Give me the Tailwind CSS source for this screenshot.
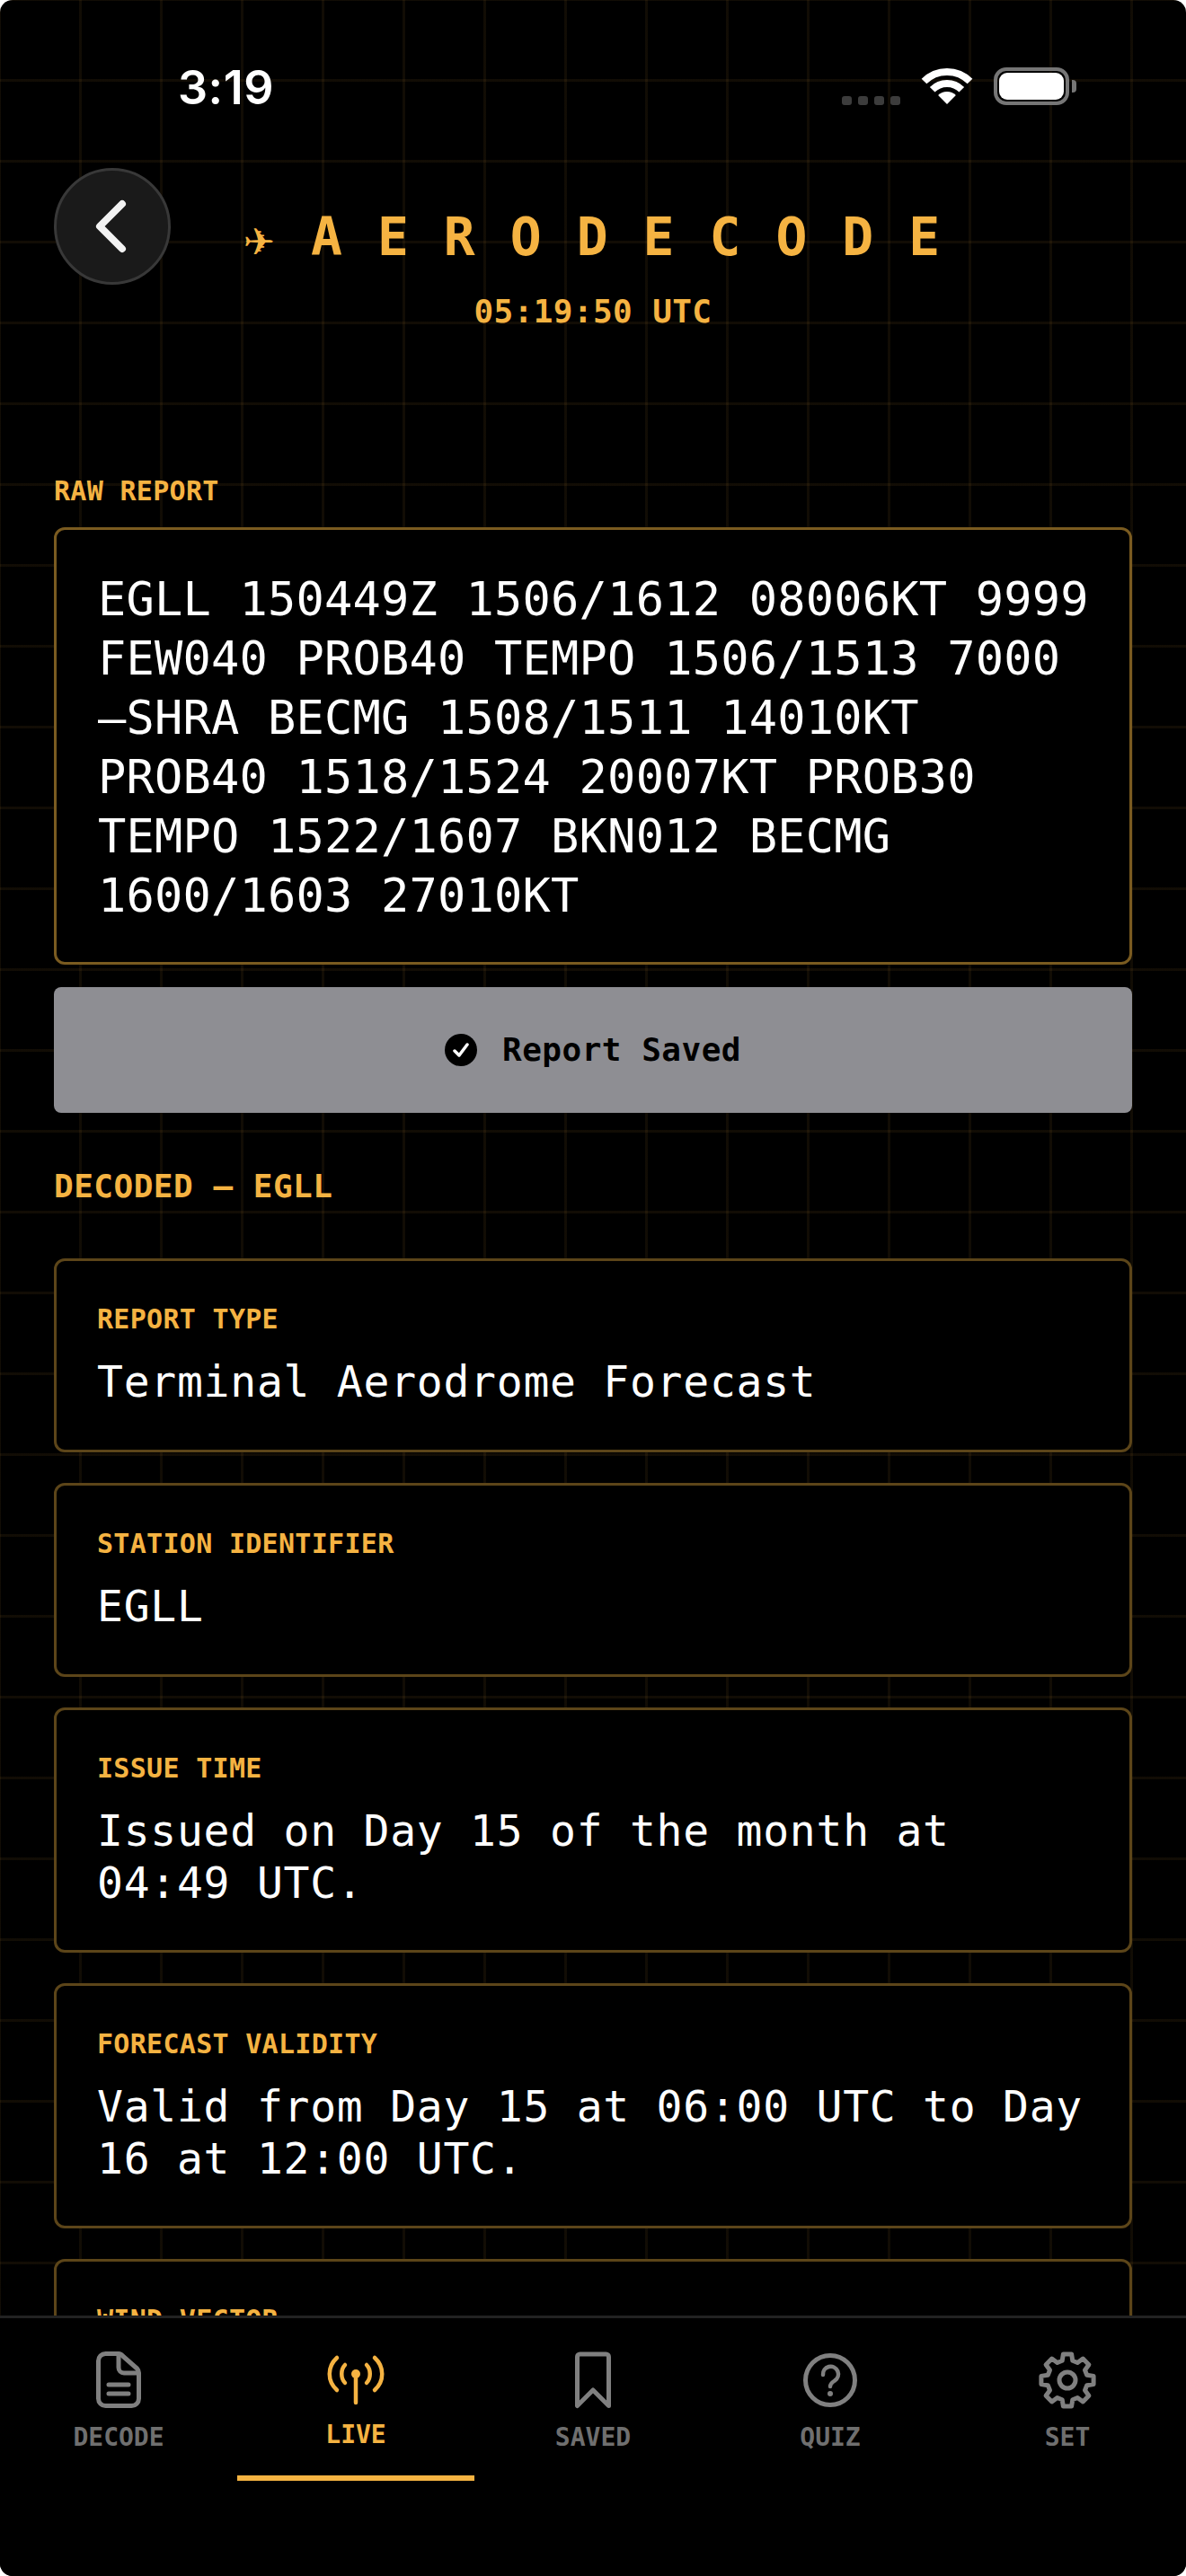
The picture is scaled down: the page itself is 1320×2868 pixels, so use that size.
<!doctype html>
<html lang="en"><head><meta charset="utf-8"><title>AeroDecode</title>
<script src="https://cdn.jsdelivr.net/npm/@tailwindcss/browser@4"></script></head>
<body class="bg-white">
<div class="relative w-[1320px] h-[2868px] overflow-hidden rounded-[14px] bg-black font-['DejaVu_Sans_Mono',monospace] text-[#f5b342] bg-[linear-gradient(to_right,rgba(245,176,65,0.07)_3px,transparent_3px),linear-gradient(to_bottom,rgba(245,176,65,0.07)_3px,transparent_3px)] bg-[size:90px_90px] bg-[position:-2px_-2px]">

  <div class="flex items-end justify-between pt-[72px] pl-[198px] pr-[122px] h-[124px]">
    <span class="font-['Inter',sans-serif] font-semibold text-[52px] leading-[52px] text-white tracking-[0.5px]">3:19</span>
    <div class="flex items-end mb-[7px]">
      <div class="flex gap-[7px] mr-[23px]">
        <span class="w-[11px] h-[10px] rounded-[3px] bg-[#3c3c3c]"></span><span class="w-[11px] h-[10px] rounded-[3px] bg-[#3c3c3c]"></span><span class="w-[11px] h-[10px] rounded-[3px] bg-[#3c3c3c]"></span><span class="w-[11px] h-[10px] rounded-[3px] bg-[#3c3c3c]"></span>
      </div>
      <svg class="mr-[23px]" width="58" height="42" viewBox="0 0 58 42" fill="none"><path d="M3.5 15.5A36 36 0 0 1 54.5 15.5" stroke="#fff" stroke-width="8"/><path d="M12.7 24.7A23 23 0 0 1 45.3 24.7" stroke="#fff" stroke-width="8"/><path d="M29 41L19.1 31.1A14 14 0 0 1 38.9 31.1Z" fill="#fff"/></svg>
      <div class="flex items-center">
        <div class="w-[84px] h-[42px] border-[4px] border-[#767676] rounded-[14px] p-[2px]"><div class="w-full h-full bg-white rounded-[9px]"></div></div>
        <div class="w-[5px] h-[14px] ml-[3px] bg-[#767676] rounded-r-[4px]"></div>
      </div>
    </div>
  </div>

  <header class="relative mt-[63px] h-[345px] text-center">
    <button class="absolute left-[60px] top-0 w-[130px] h-[130px] rounded-full bg-[#1b1b1b]/95 border-[3px] border-[#383838] flex items-center justify-center">
      <svg class="mr-[6px]" width="44" height="66" viewBox="0 0 44 66" fill="none"><path d="M36 8L11 33L36 58" stroke="#f2f2f2" stroke-width="8" stroke-linecap="round" stroke-linejoin="round"/></svg>
    </button>
    <div class="pt-[47px] pl-[36px] font-bold text-[58px] leading-[60px] tracking-[39px] whitespace-nowrap"><span class="font-['DejaVu_Sans',sans-serif] font-normal text-[42px] tracking-[0px] mr-[40px]">✈</span>AERODECODE</div>
    <div class="mt-[29px] font-bold text-[36px] leading-[36px] tracking-[0.4px]">05:19:50 UTC</div>
  </header>

  <main class="px-[60px]">
    <div class="font-bold text-[30px] leading-[30px] tracking-[0.3px]">RAW REPORT</div>
    <div class="mt-[25px] h-[487px] border-[3px] border-[#7a5b20] rounded-[12px] bg-black pt-[44px] pl-[46px] pr-[20px] text-white text-[52px] leading-[66px] tracking-[0.2px] whitespace-pre-line">EGLL 150449Z 1506/1612 08006KT 9999
FEW040 PROB40 TEMPO 1506/1513 7000
–SHRA BECMG 1508/1511 14010KT
PROB40 1518/1524 20007KT PROB30
TEMPO 1522/1607 BKN012 BECMG
1600/1603 27010KT</div>
    <button class="mt-[25px] w-full h-[140px] rounded-[8px] bg-[#8e8e93] text-black flex items-center justify-center gap-[28px] text-[36px] font-bold tracking-[0.5px]">
      <svg width="36" height="36" viewBox="0 0 36 36"><circle cx="18" cy="18" r="18" fill="#000"/><path d="M11 19L16 24L25 12" fill="none" stroke="#fff" stroke-width="3.5" stroke-linecap="round" stroke-linejoin="round"/></svg>
      <span>Report Saved</span>
    </button>
    <div class="mt-[64px] font-bold text-[36px] leading-[36px] tracking-[0.5px]">DECODED — EGLL</div>
    <div class="mt-[62px] flex flex-col gap-[34.5px]">
      <section class="h-[215.5px] border-[3px] border-[#5c4519] rounded-[12px] bg-black pl-[45px] pt-[50px]">
        <div class="font-bold text-[30px] leading-[30px] tracking-[0.3px]">REPORT TYPE</div>
        <div class="mt-[25px] text-white text-[48px] leading-[58px] tracking-[0.75px]">Terminal Aerodrome Forecast</div>
      </section>
      <section class="h-[215.5px] border-[3px] border-[#5c4519] rounded-[12px] bg-black pl-[45px] pt-[50px]">
        <div class="font-bold text-[30px] leading-[30px] tracking-[0.3px]">STATION IDENTIFIER</div>
        <div class="mt-[25px] text-white text-[48px] leading-[58px] tracking-[0.75px]">EGLL</div>
      </section>
      <section class="h-[272.5px] border-[3px] border-[#5c4519] rounded-[12px] bg-black pl-[45px] pt-[50px]">
        <div class="font-bold text-[30px] leading-[30px] tracking-[0.3px]">ISSUE TIME</div>
        <div class="mt-[25px] text-white text-[48px] leading-[58px] tracking-[0.75px] whitespace-pre-line">Issued on Day 15 of the month at
04:49 UTC.</div>
      </section>
      <section class="h-[272.5px] border-[3px] border-[#5c4519] rounded-[12px] bg-black pl-[45px] pt-[50px]">
        <div class="font-bold text-[30px] leading-[30px] tracking-[0.3px]">FORECAST VALIDITY</div>
        <div class="mt-[25px] text-white text-[48px] leading-[58px] tracking-[0.75px] whitespace-pre-line">Valid from Day 15 at 06:00 UTC to Day
16 at 12:00 UTC.</div>
      </section>
      <section class="h-[215.5px] border-[3px] border-[#5c4519] rounded-[12px] bg-black pl-[45px] pt-[50px]">
        <div class="font-bold text-[30px] leading-[30px] tracking-[0.3px]">WIND VECTOR</div>
      </section>
    </div>
  </main>

  <nav class="absolute left-0 right-0 bottom-0 h-[290px] bg-black border-t-[3px] border-[#222] grid grid-cols-5 text-[#6f6f6f] text-[28px] leading-[28px] font-bold text-center">
    <div class="flex flex-col items-center pt-[37px]">
      <svg width="56" height="64" viewBox="0 0 56 64" fill="none" stroke="#808080" stroke-width="5" stroke-linecap="round" stroke-linejoin="round"><path d="M13.5 2.5H28c2 0 3.5 1 4.5 2.5L48.5 19c1.3 1.5 2 3 2 5V52.5a8 8 0 0 1-8 8H13.5a8 8 0 0 1-8-8V10.5a8 8 0 0 1 8-8z"/><path d="M28 3V18a6 6 0 0 0 6 6H50"/><path d="M17 37H39M17 47H39"/></svg>
      <span class="mt-[18px]">DECODE</span>
    </div>
    <div class="relative flex flex-col items-center pt-[37px] text-[#f5b342]">
      <svg width="64" height="64" viewBox="0 0 64 64" fill="none" stroke="#f5b342" stroke-width="4.5" stroke-linecap="round"><path d="M11 7C0 17 0 33 11 43M53 7C64 17 64 33 53 43M20 15C15 20 15 30 20 35M44 15C49 20 49 30 44 35M32 25V57"/><circle cx="32" cy="25" r="5" fill="#f5b342" stroke="none"/></svg>
      <span class="mt-[15px]">LIVE</span>
      <span class="absolute left-0 right-0 top-[175px] h-[6px] bg-[#f5b342]"></span>
    </div>
    <div class="flex flex-col items-center pt-[37px]">
      <svg width="44" height="64" viewBox="0 0 44 64" fill="none" stroke="#808080" stroke-width="5" stroke-linejoin="round"><path d="M4.500 6a3 3 0 0 1 3-3H36.500a3 3 0 0 1 3 3V60.500L22 43 4.500 60.500Z"/></svg>
      <span class="mt-[18px]">SAVED</span>
    </div>
    <div class="flex flex-col items-center pt-[37px]">
      <svg width="64" height="64" viewBox="0 0 64 64" fill="none" stroke="#808080" stroke-width="5" stroke-linecap="round"><circle cx="32" cy="32" r="27.500"/><path d="M24 26a8.500 8.500 0 1 1 13 6.500c-3 2-5 3.500-5 6.500" stroke-width="4.500"/><circle cx="32" cy="47" r="3" fill="#808080" stroke="none"/></svg>
      <span class="mt-[18px]">QUIZ</span>
    </div>
    <div class="flex flex-col items-center pt-[37px]">
      <svg width="64" height="64" viewBox="0 0 64 64" fill="none" stroke="#808080" stroke-width="5" stroke-linejoin="round"><path d="M26.200 10.300L27.400 2.900H36.600L37.800 10.300L43.250 12.500L49.300 8.100L55.900 14.700L51.500 20.750L53.700 26.200L61.100 27.400V36.600L53.700 37.800L51.500 43.250L55.900 49.300L49.300 55.900L43.250 51.500L37.800 53.700L36.600 61.100H27.400L26.200 53.700L20.750 51.500L14.700 55.900L8.100 49.300L12.500 43.250L10.300 37.800L2.900 36.600V27.400L10.300 26.200L12.500 20.750L8.100 14.700L14.700 8.100L20.750 12.500Z"/><circle cx="32" cy="32" r="9"/></svg>
      <span class="mt-[18px]">SET</span>
    </div>
  </nav>
</div>
</body></html>
